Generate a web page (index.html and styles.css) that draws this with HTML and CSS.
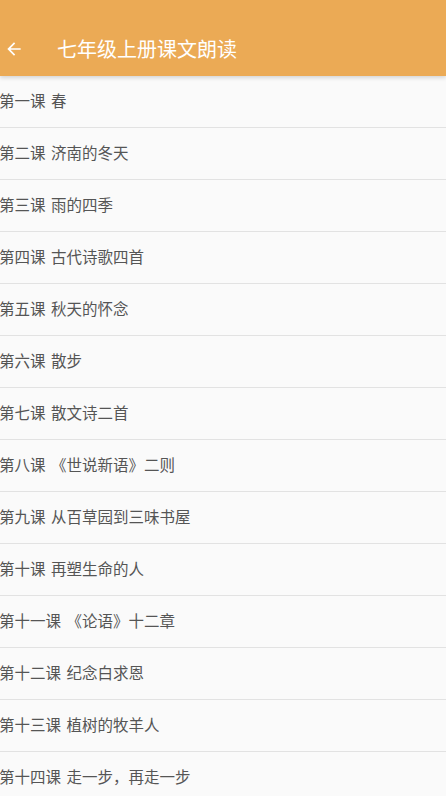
FILE: index.html
```html
<!DOCTYPE html>
<html>
<head>
    <meta charset="utf-8">
    <title>七年级上册课文朗读</title>
    <link rel="stylesheet" href="styles.css">
</head>
<body>
    <div class="toolbar">
        <svg class="back" width="20" height="20" viewBox="0 0 24 24">
            <path d="M20 11H7.83l5.59-5.59L12 4l-8 8 8 8 1.41-1.41L7.83 13H20v-2z" fill="#fff"/>
        </svg>
        <span class="title">七年级上册课文朗读</span>
    </div>
    <ul class="list">
        <li>第一课 春</li>
        <li>第二课 济南的冬天</li>
        <li>第三课 雨的四季</li>
        <li>第四课 古代诗歌四首</li>
        <li>第五课 秋天的怀念</li>
        <li>第六课 散步</li>
        <li>第七课 散文诗二首</li>
        <li>第八课 《世说新语》二则</li>
        <li>第九课 从百草园到三味书屋</li>
        <li>第十课 再塑生命的人</li>
        <li>第十一课 《论语》十二章</li>
        <li>第十二课 纪念白求恩</li>
        <li>第十三课 植树的牧羊人</li>
        <li>第十四课 走一步，再走一步</li>
    </ul>
</body>
</html>
```

FILE: styles.css
```css
body {
    margin: 0;
    background: #fafafa;
    font-family: "Noto Sans CJK SC", "Noto Sans", sans-serif;
    overflow: hidden;
}

.toolbar {
    height: 76px;
    background: #ebaa55;
    display: flex;
    align-items: center;
    padding: 21px 0 0 4px;
    box-sizing: border-box;
    box-shadow: 0 2px 4px rgba(0,0,0,0.15);
    position: relative;
}

.back {
    margin-right: 33px;
}

.title {
    color: #fff;
    font-size: 20px;
}

.list {
    list-style: none;
    margin: 0;
    padding: 0;
}

.list li {
    height: 52px;
    line-height: 49px;
    font-size: 15.5px;
    word-spacing: 2px;
    color: #555;
    border-bottom: 1px solid #e2e2e2;
    box-sizing: border-box;
    margin-left: -1px;
}
```
